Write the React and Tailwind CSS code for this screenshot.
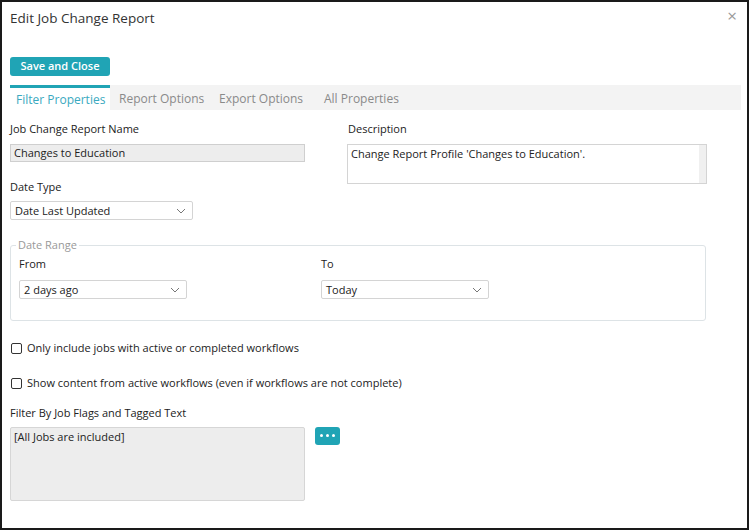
import React from "react";

const font = { fontFamily: '"Open Sans", "Noto Sans", sans-serif' };

const Chevron = () => (
    <svg width="10" height="6" viewBox="0 0 10 6" className="text-[#777]">
        <path d="M1 1l4 4 4-4" fill="none" stroke="currentColor" strokeWidth="1" />
    </svg>
);

const Select = ({ value, className }) => (
    <div className={"flex h-[19px] items-center justify-between rounded-[2px] border border-[#d4d4d4] bg-white pl-[4px] pr-[6px] text-[11px] text-[#222] " + className}>
        <span>{value}</span>
        <Chevron />
    </div>
);

const Check = ({ label }) => (
    <label className="flex items-center gap-[5px] text-[11px] text-[#222]">
        <span className="inline-block h-[11px] w-[11px] rounded-[2px] border border-[#333] bg-white" />
        {label}
    </label>
);

const App = () => {
    return (
        <div className="relative h-[530px] w-[749px] border-2 border-[#1a1a1a] bg-white" style={font}>
            <div className="flex items-start justify-between pl-[8px] pr-[10px] pt-[6px]">
                <h1 className="text-[13.5px] text-[#333]">Edit Job Change Report</h1>
                <span className="mt-[-1px] text-[17px] leading-none text-[#999]">×</span>
            </div>

            <div className="pl-[8px] pt-[24px]">
                <button className="h-[19px] w-[100px] rounded-[3px] bg-[#20a4b5] text-[11px] font-semibold text-white">
                    Save and Close
                </button>
            </div>

            <div className="ml-[8px] mr-[6px] mt-[9px] flex h-[25px] bg-[#f3f3f3] text-[12px]">
                <div className="w-[100px] border-t-[3px] border-[#20a4b5] bg-white pl-[6px] pt-[3px] text-[#3aa9c0]">Filter Properties</div>
                <div className="w-[100px] pl-[9px] pt-[5px] text-[#8a8a8a]">Report Options</div>
                <div className="w-[105px] pl-[9px] pt-[5px] text-[#8a8a8a]">Export Options</div>
                <div className="pl-[9px] pt-[5px] text-[#8a8a8a]">All Properties</div>
            </div>

            <div className="pl-[8px] pr-[40px] pt-[11px] text-[11px] text-[#222]">
                <div className="flex">
                    <div className="w-[338px]">
                        <div>Job Change Report Name</div>
                        <div className="mt-[6px] flex h-[18px] w-[295px] items-center border border-[#cfcfcf] bg-[#ededed] pl-[3px]">
                            Changes to Education
                        </div>
                        <div className="mt-[17px]">Date Type</div>
                        <Select value="Date Last Updated" className="mt-[6px] w-[183px]" />
                    </div>
                    <div>
                        <div className="pl-[1px]">Description</div>
                        <div className="mt-[6px] flex h-[40px] w-[360px] border border-[#d4d4d4] bg-white">
                            <div className="flex-1 pl-[3px] pt-[1px]">Change Report Profile 'Changes to Education'.</div>
                            <div className="w-[7px] bg-[#f0f0f0]" />
                        </div>
                    </div>
                </div>

                <fieldset className="mt-[17px] h-[84px] w-[696px] rounded-[3px] border border-[#dde3e6] pl-[8px] pr-[10px]">
                    <legend className="ml-[-3px] px-[2px] text-[#999]">Date Range</legend>
                    <div className="flex">
                        <div className="w-[302px]">
                            <div className="pt-[2px]">From</div>
                            <Select value="2 days ago" className="mt-[8px] w-[168px]" />
                        </div>
                        <div>
                            <div className="pt-[2px]">To</div>
                            <Select value="Today" className="mt-[8px] w-[168px]" />
                        </div>
                    </div>
                </fieldset>

                <div className="mt-[19px] pl-[1px]">
                    <Check label="Only include jobs with active or completed workflows" />
                </div>
                <div className="mt-[18px] pl-[1px]">
                    <Check label="Show content from active workflows (even if workflows are not complete)" />
                </div>

                <div className="mt-[14px]">Filter By Job Flags and Tagged Text</div>
                <div className="mt-[5px] flex items-start gap-[10px]">
                    <div className="h-[74px] w-[295px] rounded-[2px] border border-[#d6d6d6] bg-[#ededed] pl-[3px] pt-[1px]">
                        [All Jobs are included]
                    </div>
                    <button className="flex h-[18px] w-[25px] items-center justify-center gap-[3px] rounded-[3px] bg-[#20a4b5]">
                        <span className="h-[3px] w-[3px] rounded-full bg-white" />
                        <span className="h-[3px] w-[3px] rounded-full bg-white" />
                        <span className="h-[3px] w-[3px] rounded-full bg-white" />
                    </button>
                </div>
            </div>
        </div>
    );
};

export default App;
